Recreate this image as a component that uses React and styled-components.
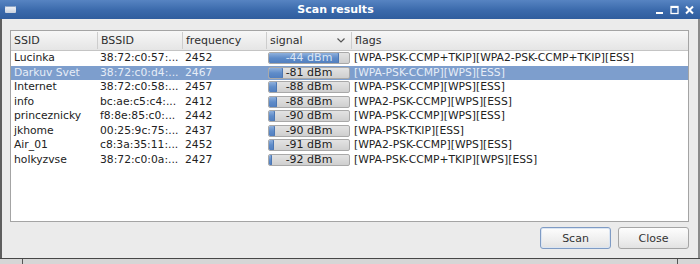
import React from "react";
import styled, { createGlobalStyle } from "styled-components";

const Global = createGlobalStyle`
  html, body {
    margin: 0;
    padding: 0;
    background: #ebebeb;
  }
  body {
    font-family: "DejaVu Sans", "Liberation Sans", sans-serif;
  }
`;

const COLS = "86px 85px 84px 85px 1fr";

const Window = styled.div`
  width: 700px;
  height: 264px;
  display: flex;
  flex-direction: column;
  background: #ebebeb;
  overflow: hidden;
`;

const TitleBar = styled.div`
  height: 19px;
  flex: none;
  display: flex;
  align-items: center;
  padding: 0 6px 0 5px;
  background: linear-gradient(#5784c2, #3a69ab 55%, #2f5d9e);
  color: #fff;
`;

const MenuIcon = styled.div`
  width: 11px;
  height: 7px;
  border-radius: 1px;
  background: linear-gradient(#f2f4f8, #c9d2df);
  box-shadow: inset 0 1px 0 #8aa3c6;
`;

const Title = styled.div`
  flex: 1;
  text-align: center;
  font-weight: bold;
  font-size: 11px;
`;

const Controls = styled.div`
  display: flex;
  gap: 6px;
  align-items: center;
`;

const Body = styled.div`
  flex: 1;
  display: flex;
  flex-direction: column;
  border-left: 2px solid #5e5e5e;
  border-right: 2px solid #8a8a8a;
  padding: 11px 9px 9px 8px;
  box-sizing: border-box;
`;

const Table = styled.div`
  height: 192px;
  box-sizing: border-box;
  background: #fff;
  border: 1px solid #a4a4a4;
  font-size: 10.75px;
  color: #222;
`;

const HeaderRow = styled.div`
  display: grid;
  grid-template-columns: ${COLS};
  height: 19px;
  background: linear-gradient(#f7f7f7, #e5e5e5);
  border-bottom: 1px solid #c4c4c4;
`;

const HeadCell = styled.div`
  display: flex;
  align-items: center;
  justify-content: space-between;
  padding: 0 6px 0 3px;
  color: #2e2e2e;
  font-size: 11px;
  border-left: ${(p) => (p.first ? "none" : "1px solid #cdcdcd")};
  margin: ${(p) => (p.first ? "0" : "1px 0")};
`;

const Row = styled.div`
  display: grid;
  grid-template-columns: ${COLS};
  height: 14.5px;
  align-items: center;
  background: ${(p) => (p.selected ? "#7d9ecd" : "transparent")};
  color: ${(p) => (p.selected ? "#e6edf7" : "#222")};
`;

const Cell = styled.div`
  padding-left: ${(p) => p.pad ?? 3}px;
  white-space: nowrap;
  overflow: hidden;
  line-height: 14px;
`;

const Bar = styled.div`
  position: relative;
  margin-left: 2px;
  width: 82px;
  height: 12px;
  box-sizing: border-box;
  border: 1px solid #a9a9a9;
  border-radius: 2px;
  background: linear-gradient(#e3e3e3, #cfcfcf);
  overflow: hidden;
`;

const Fill = styled.div`
  height: 100%;
  border-radius: 1px;
  background: linear-gradient(#8fb0dc, #5f8cc9 50%, #527fbf);
  box-shadow: inset -1px 0 0 #4c77b3;
`;

const BarText = styled.div`
  position: absolute;
  inset: 0;
  display: flex;
  align-items: center;
  justify-content: center;
  font-size: 11px;
  color: ${(p) => (p.light ? "#dbe5f3" : "#222")};
`;

const Footer = styled.div`
  display: flex;
  justify-content: flex-end;
  gap: 7px;
  margin-top: 5px;
`;

const Button = styled.button`
  width: 71px;
  height: 22px;
  box-sizing: border-box;
  border: 1px solid ${(p) => (p.focus ? "#7f9bc4" : "#a5a5a5")};
  border-radius: 3px;
  background: linear-gradient(#fdfdfd, #eeeeee 60%, #e2e2e2);
  box-shadow: ${(p) => (p.focus ? "inset 0 0 0 1px #dbe5f2" : "none")};
  font-family: "DejaVu Sans", sans-serif;
  font-size: 11px;
  color: #333;
  padding: 0;
`;

const BottomEdge = styled.div`
  height: 5px;
  flex: none;
  border-top: 1px solid #474747;
  background: #d6d6d6;
  display: flex;
  justify-content: space-between;
  padding: 0 22px;
`;

const Grip = styled.div`
  width: 1px;
  background: #555;
`;

const networks = [
  ["Lucinka", "38:72:c0:57:...", "2452", -44, 88, "[WPA-PSK-CCMP+TKIP][WPA2-PSK-CCMP+TKIP][ESS]"],
  ["Darkuv Svet", "38:72:c0:d4:...", "2467", -81, 18, "[WPA-PSK-CCMP][WPS][ESS]"],
  ["Internet", "38:72:c0:58:...", "2457", -88, 10, "[WPA-PSK-CCMP][WPS][ESS]"],
  ["info", "bc:ae:c5:c4:...", "2412", -88, 10, "[WPA2-PSK-CCMP][WPS][ESS]"],
  ["princeznicky", "f8:8e:85:c0:...", "2442", -90, 7, "[WPA-PSK-CCMP][WPS][ESS]"],
  ["jkhome", "00:25:9c:75:...", "2437", -90, 7, "[WPA-PSK-TKIP][ESS]"],
  ["Air_01", "c8:3a:35:11:...", "2452", -91, 6, "[WPA2-PSK-CCMP][WPS][ESS]"],
  ["holkyzvse", "38:72:c0:0a:...", "2427", -92, 4, "[WPA-PSK-CCMP+TKIP][WPS][ESS]"],
];

const Signal = ({ dbm, pct }) => (
  <Bar>
    <Fill style={{ width: `${pct}%` }} />
    <BarText light={pct > 60}>{dbm} dBm</BarText>
  </Bar>
);

export default function App() {
  return (
    <Window>
      <Global />
      <TitleBar>
        <MenuIcon />
        <Title>Scan results</Title>
        <Controls>
          <svg width="9" height="10" viewBox="0 0 9 10">
            <rect x="1" y="7" width="7" height="2" fill="#fff" />
          </svg>
          <svg width="9" height="10" viewBox="0 0 9 10">
            <rect x="1" y="1.5" width="7" height="7" fill="none" stroke="#fff" strokeWidth="1.3" />
            <rect x="1" y="1" width="7" height="2" fill="#fff" />
          </svg>
          <svg width="9" height="10" viewBox="0 0 9 10">
            <path d="M1 1.5 L8 8.5 M8 1.5 L1 8.5" stroke="#fff" strokeWidth="2" />
          </svg>
        </Controls>
      </TitleBar>
      <Body>
        <Table>
          <HeaderRow>
            <HeadCell first>SSID</HeadCell>
            <HeadCell>BSSID</HeadCell>
            <HeadCell>frequency</HeadCell>
            <HeadCell>
              signal
              <svg width="8" height="5" viewBox="0 0 8 5">
                <path d="M0.5 0.5 L4 4 L7.5 0.5" fill="none" stroke="#555" strokeWidth="1.2" />
              </svg>
            </HeadCell>
            <HeadCell>flags</HeadCell>
          </HeaderRow>
          {networks.map(([ssid, bssid, freq, dbm, pct, flags], i) => (
            <Row key={ssid} selected={i === 1}>
              <Cell>{ssid}</Cell>
              <Cell>{bssid}</Cell>
              <Cell>{freq}</Cell>
              <Cell pad={0}>
                <Signal dbm={dbm} pct={pct} />
              </Cell>
              <Cell pad={3}>{flags}</Cell>
            </Row>
          ))}
        </Table>
        <Footer>
          <Button focus>Scan</Button>
          <Button>Close</Button>
        </Footer>
      </Body>
      <BottomEdge>
        <Grip />
        <Grip />
      </BottomEdge>
    </Window>
  );
}
